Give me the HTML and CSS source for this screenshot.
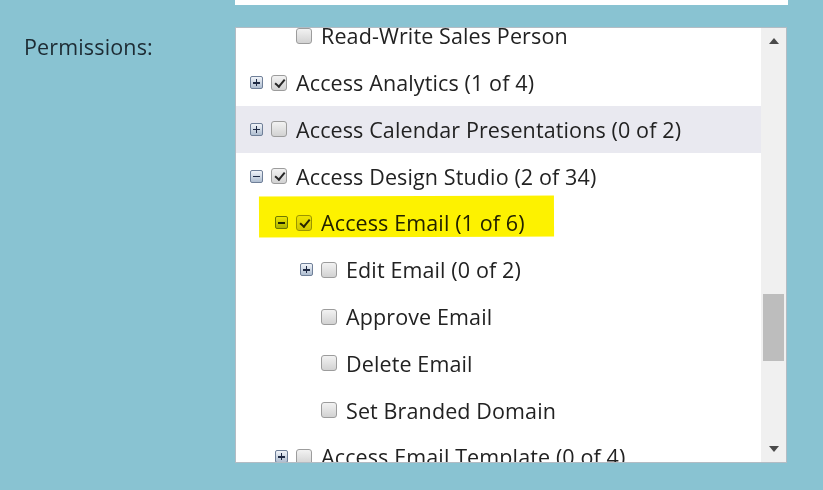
FILE: index.html
```html
<!DOCTYPE html>
<html>
<head>
<meta charset="utf-8">
<link rel="stylesheet" href="styles.css">
</head>
<body>
<div class="topbox"></div>
<div class="field">
  <div class="label">Permissions:</div>
  <div class="listbox">
    <div class="list">
      <div class="rows">
        <div class="row lvl1"><span class="exp none"></span><span class="cb"></span><span class="txt">Read-Write Sales Person</span></div>
        <div class="row lvl0"><span class="exp plus"></span><span class="cb checked"></span><span class="txt">Access Analytics (1 of 4)</span></div>
        <div class="row lvl0 hover"><span class="exp plus"></span><span class="cb"></span><span class="txt">Access Calendar Presentations (0 of 2)</span></div>
        <div class="row lvl0"><span class="exp minus"></span><span class="cb checked"></span><span class="txt">Access Design Studio (2 of 34)</span></div>
        <div class="row lvl1 marked"><span class="exp minus"></span><span class="cb checked"></span><span class="txt">Access Email (1 of 6)</span><span class="marker"></span></div>
        <div class="row lvl2"><span class="exp plus"></span><span class="cb"></span><span class="txt">Edit Email (0 of 2)</span></div>
        <div class="row lvl2"><span class="exp none"></span><span class="cb"></span><span class="txt">Approve Email</span></div>
        <div class="row lvl2"><span class="exp none"></span><span class="cb"></span><span class="txt">Delete Email</span></div>
        <div class="row lvl2"><span class="exp none"></span><span class="cb"></span><span class="txt">Set Branded Domain</span></div>
        <div class="row lvl1"><span class="exp plus"></span><span class="cb"></span><span class="txt">Access Email Template (0 of 4)</span></div>
      </div>
    </div>
    <div class="scrollbar">
      <div class="arrow up"></div>
      <div class="track"><div class="thumb"></div></div>
      <div class="arrow down"></div>
    </div>
  </div>
</div>
</body>
</html>
```

FILE: styles.css
```css
html, body {
  margin: 0;
  padding: 0;
  background: #89c3d2;
  font-family: "Open Sans", "Noto Sans", sans-serif;
  height: 490px;
  overflow: hidden;
}
.topbox {
  margin-left: 235px;
  width: 553px;
  height: 5px;
  background: #ffffff;
}
.field {
  display: flex;
  margin-top: 22px;
}
.label {
  width: 211px;
  padding-left: 24px;
  padding-top: 5px;
  font-size: 21.5px;
  letter-spacing: 0.15px;
  color: #1d2b33;
  line-height: 30px;
}
.listbox {
  width: 550px;
  height: 434px;
  border: 1px solid #b3bcc4;
  background: #ffffff;
  display: flex;
  overflow: hidden;
}
.list {
  flex: 1;
  overflow: hidden;
}
.rows {
  margin-top: -15.6px;
}
.row {
  position: relative;
  height: 46.8px;
  display: flex;
  align-items: center;
  font-size: 21.5px;
  letter-spacing: 0.12px;
  color: #222222;
  white-space: nowrap;
}
.row.hover { background: #e9e9f0; }
.lvl0 { padding-left: 14px; }
.lvl1 { padding-left: 39px; }
.lvl2 { padding-left: 64px; }
.exp {
  width: 11px;
  height: 11px;
  margin-right: 8px;
  border: 1px solid #6f7f98;
  border-radius: 2px;
  background: linear-gradient(#f1f4f9, #aebdd0);
  position: relative;
  flex: none;
}
.exp.none { border-color: transparent; background: none; }
.exp.plus::before, .exp.minus::before {
  content: "";
  position: absolute;
  left: 2px;
  top: 5px;
  width: 7px;
  height: 1.5px;
  background: #1f2a44;
}
.exp.plus::after {
  content: "";
  position: absolute;
  left: 4.7px;
  top: 2px;
  width: 1.5px;
  height: 7px;
  background: #1f2a44;
}
.cb {
  width: 14px;
  height: 14px;
  border: 1px solid #9c9c9c;
  border-radius: 3px;
  background: linear-gradient(#f2f2f2, #d2d2d2);
  margin-right: 9px;
  flex: none;
  position: relative;
}
.cb.checked::after {
  content: "";
  position: absolute;
  left: 5px;
  top: 1px;
  width: 3.5px;
  height: 8px;
  border: solid #262626;
  border-width: 0 2.6px 2.6px 0;
  transform: rotate(40deg);
}
.txt { position: relative; }
.marker {
  position: absolute;
  left: 23px;
  top: -4px;
  width: 295px;
  height: 41px;
  background: #fdf200;
  mix-blend-mode: multiply;
  transform: rotate(-0.2deg);
}
.scrollbar {
  width: 25px;
  background: #f0f0f0;
  display: flex;
  flex-direction: column;
  align-items: center;
}
.arrow {
  width: 0;
  height: 0;
  border-left: 5.5px solid transparent;
  border-right: 5.5px solid transparent;
  flex: none;
}
.arrow.up {
  margin-top: 10px;
  border-bottom: 6px solid #4a4a4a;
}
.arrow.down {
  margin-bottom: 10px;
  border-top: 6px solid #4a4a4a;
}
.track {
  flex: 1;
  width: 100%;
  display: flex;
  justify-content: center;
}
.thumb {
  width: 21px;
  height: 67px;
  margin-top: 250px;
  background: #bdbdbd;
}
```
